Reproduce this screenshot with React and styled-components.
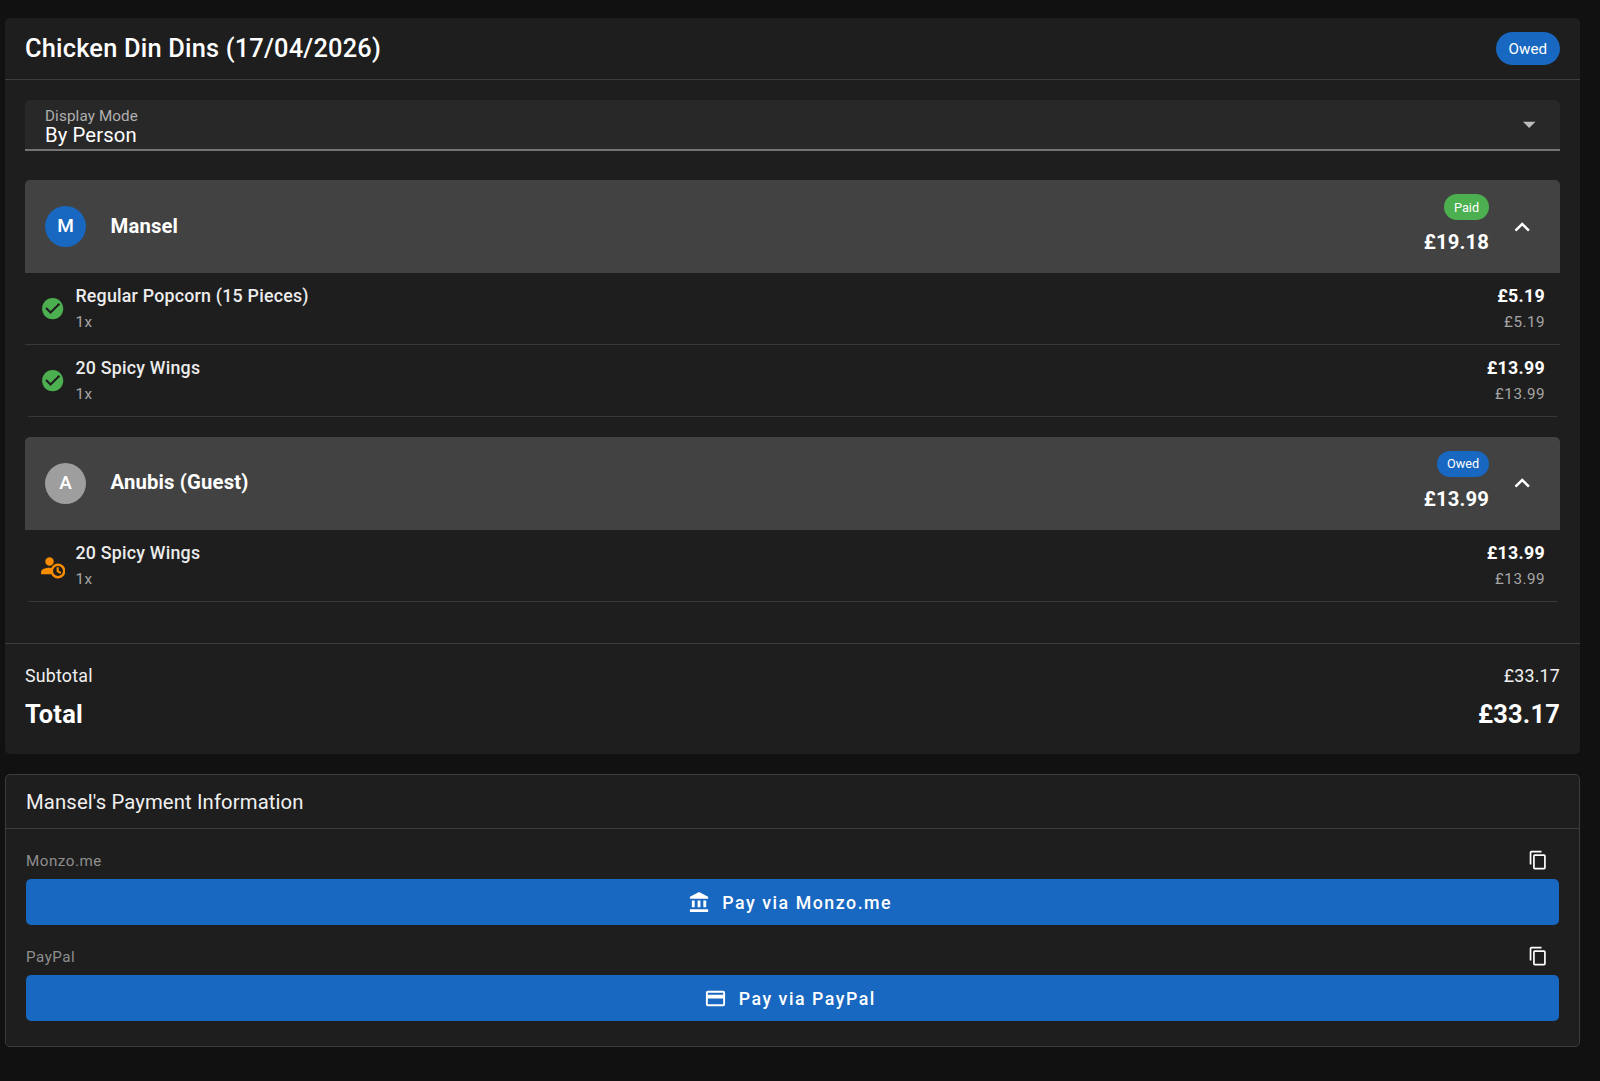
import { useState } from 'react';
import styled, { createGlobalStyle } from 'styled-components';

const icons = {
  checkCircle:
    'M12 2C6.5 2 2 6.5 2 12S6.5 22 12 22 22 17.5 22 12 17.5 2 12 2M10 17L5 12L6.41 10.59L10 14.17L17.59 6.58L19 8L10 17Z',
  accountClock:
    'M15.7,13.5H17.7V16.6L20.2,18.1L19.2,19.8L15.7,17.7V13.5M17,12.3A4.7,4.7 0 0,0 12.3,17A4.7,4.7 0 0,0 17,21.7A4.7,4.7 0 0,0 21.7,17A4.7,4.7 0 0,0 17,12.3M17,10A7,7 0 0,1 24,17A7,7 0 0,1 17,24C14.21,24 11.8,22.36 10.67,20H1V18C1,15.79 4.58,14 9,14C9.59,14 10.17,14.03 10.73,14.09C11.84,11.67 14.22,10 17,10M9,4A4,4 0 0,1 13,8A4,4 0 0,1 9,12A4,4 0 0,1 5,8A4,4 0 0,1 9,4Z',
  chevronUp: 'M7.41,15.41L12,10.83L16.59,15.41L18,14L12,8L6,14L7.41,15.41Z',
  menuDown: 'M7,10L12,15L17,10H7Z',
  bank: 'M11.5,1L2,6V8H21V6M16,10V17H19V10M2,22H21V19H2M10,10V17H13V10M4,10V17H7V10H4Z',
  creditCard:
    'M20,4H4A2,2 0 0,0 2,6V18A2,2 0 0,0 4,20H20A2,2 0 0,0 22,18V6A2,2 0 0,0 20,4M20,18H4V12H20V18M20,8H4V6H20V8Z',
  copy: 'M19,21H8V7H19M19,5H8A2,2 0 0,0 6,7V21A2,2 0 0,0 8,23H19A2,2 0 0,0 21,21V7A2,2 0 0,0 19,5M16,1H4A2,2 0 0,0 2,3V17H4V3H16V1Z',
};

const people = [
  {
    name: 'Mansel',
    initial: 'M',
    color: '#1867c0',
    status: 'Paid',
    total: '£19.18',
    items: [
      { name: 'Regular Popcorn (15 Pieces)', qty: '1x', price: '£5.19', paid: true },
      { name: '20 Spicy Wings', qty: '1x', price: '£13.99', paid: true },
    ],
  },
  {
    name: 'Anubis (Guest)',
    initial: 'A',
    color: '#9e9e9e',
    status: 'Owed',
    total: '£13.99',
    items: [{ name: '20 Spicy Wings', qty: '1x', price: '£13.99', paid: false }],
  },
];

const payments = [
  { label: 'Monzo.me', icon: 'bank' },
  { label: 'PayPal', icon: 'creditCard' },
];

const Icon = ({ name, size, color = '#fff' }) => (
  <Svg viewBox="0 0 24 24" $size={size} $color={color}>
    <path d={icons[name]} />
  </Svg>
);

const PersonPanel = ({ person }) => {
  const [open, setOpen] = useState(true);

  return (
    <Panel>
      <PanelHeader onClick={() => setOpen(!open)}>
        <Avatar $color={person.color}>{person.initial}</Avatar>
        <PersonName>{person.name}</PersonName>
        <PanelSummary>
          <SmallChip $status={person.status}>{person.status}</SmallChip>
          <PanelTotal>{person.total}</PanelTotal>
        </PanelSummary>
        <Chevron $open={open}>
          <Icon name="chevronUp" size={30.4} />
        </Chevron>
      </PanelHeader>
      {open &&
        person.items.map((item) => (
          <ItemRow key={item.name}>
            <ItemIcon>
              <Icon
                name={item.paid ? 'checkCircle' : 'accountClock'}
                size={25.4}
                color={item.paid ? '#4caf50' : '#fb8c00'}
              />
            </ItemIcon>
            <ItemText>
              <ItemName>{item.name}</ItemName>
              <ItemSub>{item.qty}</ItemSub>
            </ItemText>
            <ItemPrices>
              <ItemPrice>{item.price}</ItemPrice>
              <ItemSub>{item.price}</ItemSub>
            </ItemPrices>
          </ItemRow>
        ))}
    </Panel>
  );
};

const App = () => (
  <>
    <GlobalStyle />
    <Page>
      <OrderCard>
        <OrderHeader>
          <OrderTitle>Chicken Din Dins (17/04/2026)</OrderTitle>
          <Chip $status="Owed">Owed</Chip>
        </OrderHeader>
        <OrderBody>
          <Select>
            <div>
              <SelectLabel>Display Mode</SelectLabel>
              <SelectValue>By Person</SelectValue>
            </div>
            <Icon name="menuDown" size={30.4} color="#bcbcbc" />
          </Select>
          <Panels>
            {people.map((person) => (
              <PersonPanel key={person.name} person={person} />
            ))}
          </Panels>
        </OrderBody>
        <Totals>
          <Subtotal>
            <span>Subtotal</span>
            <span>£33.17</span>
          </Subtotal>
          <Total>
            <span>Total</span>
            <span>£33.17</span>
          </Total>
        </Totals>
      </OrderCard>

      <PaymentCard>
        <PaymentTitle>Mansel's Payment Information</PaymentTitle>
        <PaymentBody>
          {payments.map((payment) => (
            <div key={payment.label}>
              <PaymentLabel>
                <span>{payment.label}</span>
                <CopyButton aria-label="Copy">
                  <Icon name="copy" size={20.3} />
                </CopyButton>
              </PaymentLabel>
              <PayButton>
                <Icon name={payment.icon} size={23} />
                Pay via {payment.label}
              </PayButton>
            </div>
          ))}
        </PaymentBody>
      </PaymentCard>
    </Page>
  </>
);

export default App;

// Styled components
const GlobalStyle = createGlobalStyle`
  * {
    box-sizing: border-box;
  }

  body {
    margin: 0;
    background: #111;
    color: #fff;
    font-family: Roboto, sans-serif;
  }
`;

const Svg = styled.svg`
  display: block;
  flex: none;
  width: ${({ $size }) => $size}px;
  height: ${({ $size }) => $size}px;
  fill: ${({ $color }) => $color};
`;

const Page = styled.main`
  display: flex;
  flex-direction: column;
  gap: 20px;
  min-height: 1081px;
  padding: 18px 20px 0 5px;
`;

const Card = styled.section`
  background: #1e1e1e;
  border-radius: 5px;
`;

const OrderCard = styled(Card)`
  height: 736px;
`;

const OrderHeader = styled.header`
  display: flex;
  align-items: center;
  justify-content: space-between;
  height: 62px;
  padding: 0 20px;
  border-bottom: 1px solid #3e3e3e;
`;

const OrderTitle = styled.h1`
  margin: 0;
  padding-bottom: 2px;
  font-size: 25.4px;
  font-weight: 500;
  letter-spacing: 0.0075em;
`;

const Chip = styled.span`
  display: inline-flex;
  align-items: center;
  height: 33px;
  padding: 0 13px;
  border-radius: 17px;
  background: ${({ $status }) => ($status === 'Paid' ? '#4caf50' : '#1867c0')};
  font-size: 15.2px;
`;

const SmallChip = styled(Chip)`
  height: 26px;
  padding: 0 10px;
  font-size: 12.7px;
`;

const OrderBody = styled.div`
  height: 563px;
  padding: 20px 20px 0;
`;

const Select = styled.div`
  display: flex;
  align-items: center;
  justify-content: space-between;
  height: 51px;
  padding: 0 16px 0 20px;
  border-bottom: 2px solid #747474;
  border-radius: 5px 5px 0 0;
  background: #282828;
`;

const SelectLabel = styled.div`
  padding-top: 5px;
  font-size: 15.2px;
  line-height: 19px;
  letter-spacing: 0.009em;
  color: #b0b0b0;
`;

const SelectValue = styled.div`
  padding-bottom: 2px;
  font-size: 20.3px;
  line-height: 19px;
  letter-spacing: 0.1px;
`;

const Panels = styled.div`
  display: flex;
  flex-direction: column;
  gap: 20px;
  margin-top: 29px;
`;

const Panel = styled.section`
  border-radius: 5px 5px 0 0;
  overflow: hidden;
`;

const PanelHeader = styled.div`
  display: flex;
  align-items: center;
  height: 93.4px;
  padding: 0 23px 0 20px;
  background: #424242;
  cursor: pointer;
`;

const Avatar = styled.div`
  display: flex;
  align-items: center;
  justify-content: center;
  width: 41px;
  height: 41px;
  padding-bottom: 2px;
  border-radius: 50%;
  background: ${({ $color }) => $color};
  font-size: 19px;
  font-weight: 500;
`;

const PersonName = styled.div`
  flex: 1;
  margin-left: 24.5px;
  padding-bottom: 2px;
  font-size: 20.3px;
  font-weight: 700;
  letter-spacing: 0.15px;
`;

const PanelSummary = styled.div`
  display: flex;
  flex-direction: column;
  align-items: flex-end;
  padding-bottom: 2px;
`;

const PanelTotal = styled.div`
  margin-top: 7px;
  font-size: 20.3px;
  line-height: 30px;
  font-weight: 700;
  letter-spacing: 0.15px;
`;

const Chevron = styled.div`
  margin-left: 17.5px;
  transform: ${({ $open }) => ($open ? 'none' : 'rotate(180deg)')};
`;

const ItemRow = styled.div`
  display: flex;
  height: 71.7px;
  padding: 10px 15px 0;
  border-bottom: 1px solid #383838;

  &:last-child {
    margin: 0 3px;
    padding: 10px 12px 0;
  }
`;

const ItemIcon = styled.div`
  padding-top: 13px;
`;

const ItemText = styled.div`
  flex: 1;
  margin-left: 10px;
`;

const ItemName = styled.div`
  font-size: 17.8px;
  line-height: 26px;
  font-weight: 500;
  letter-spacing: 0.23px;
  color: #ececec;
`;

const ItemSub = styled.div`
  font-size: 15.2px;
  line-height: 26px;
  letter-spacing: 0.5px;
  color: #a6a6a6;
`;

const ItemPrices = styled.div`
  text-align: right;
`;

const ItemPrice = styled.div`
  font-size: 17.8px;
  line-height: 26px;
  font-weight: 700;
  letter-spacing: 0.3px;
`;

const Totals = styled.footer`
  border-top: 1px solid #3e3e3e;
  padding: 18px 20px 0;
`;

const TotalRow = styled.div`
  display: flex;
  justify-content: space-between;
  letter-spacing: 0.22px;
`;

const Subtotal = styled(TotalRow)`
  font-size: 17.8px;
  line-height: 28px;
  color: #f0f0f0;
`;

const Total = styled(TotalRow)`
  margin-top: 4px;
  font-size: 25.4px;
  line-height: 40px;
  font-weight: 700;
`;

const PaymentCard = styled(Card)`
  height: 273px;
  border: 1px solid #3c3c3c;
`;

const PaymentTitle = styled.h2`
  margin: 0;
  padding: 1px 20px 0;
  border-bottom: 1px solid #3c3c3c;
  font-size: 20.3px;
  line-height: 52px;
  font-weight: 400;
  letter-spacing: 0.12px;
  color: #f0f0f0;
`;

const PaymentBody = styled.div`
  display: flex;
  flex-direction: column;
  gap: 15px;
  padding: 15px 20px 0;
`;

const PaymentLabel = styled.div`
  display: flex;
  align-items: center;
  justify-content: space-between;
  height: 35px;
  padding: 0 11px 2px 0;
  font-size: 15.2px;
  letter-spacing: 0.033em;
  color: #8e8e8e;
`;

const CopyButton = styled.button`
  padding: 0;
  border: none;
  background: none;
  cursor: pointer;
`;

const PayButton = styled.button`
  display: flex;
  align-items: center;
  justify-content: center;
  gap: 11.5px;
  width: 100%;
  height: 46px;
  padding: 0 10px 0 5px;
  border: none;
  border-radius: 5px;
  background: #1867c0;
  color: #fff;
  font-family: inherit;
  font-size: 17.8px;
  font-weight: 500;
  letter-spacing: 0.085em;
  cursor: pointer;
`;
